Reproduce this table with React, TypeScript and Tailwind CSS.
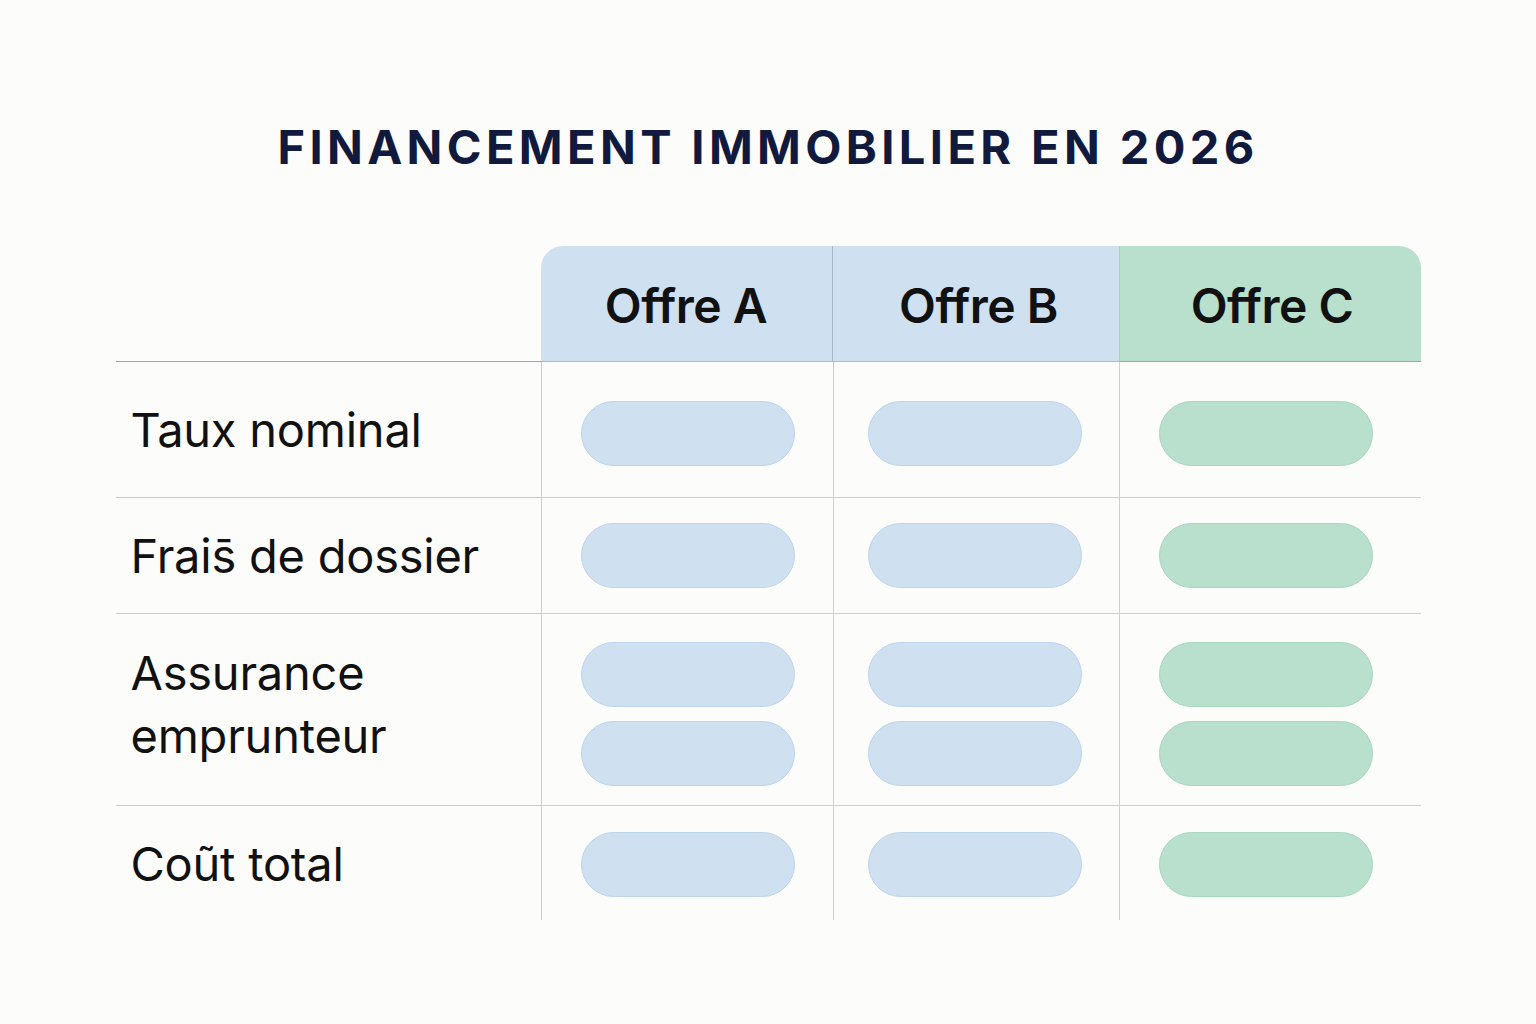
import React from "react";

const Pill = ({ green }: { green?: boolean }) => (
  <div
    className={
      "h-[65px] w-[214px] rounded-full border " +
      (green ? "bg-[#b9dfcd] border-[#a8d6bf]" : "bg-[#cfe0f1] border-[#bdd4ec]")
    }
  />
);

const rows: { label: React.ReactNode; h: string; count: number; pad: string }[] = [
  { label: "Taux nominal", h: "h-[136px]", count: 1, pad: " pt-[7px]" },
  { label: "Frais\u0304 de dossier", h: "h-[116px]", count: 1, pad: "" },
  { label: <>Assurance<br />emprunteur</>, h: "h-[192px]", count: 2, pad: " pt-[8px]" },
  { label: "Co\u0169t total", h: "h-[114px]", count: 1, pad: " pt-[2px]" },
];

export default function App() {
  return (
    <div
      className="min-h-[1024px] w-full bg-[#fcfcfb] text-[#111111]"
      style={{ fontFamily: "Inter, 'Noto Sans', sans-serif" }}
    >
      <div className="pt-[117px] text-center">
        <h1 className="text-[47px] font-bold tracking-[0.093em] leading-[60px] text-[#111a3d]">
          FINANCEMENT IMMOBILIER EN 2026
        </h1>
      </div>
      <div className="mx-auto mt-[69px] w-[1305px]">
        <div className="grid grid-cols-[425px_292px_286px_302px]">
          <div className="h-[116px] border-b border-[#a3a3a3]" />
          <div className="flex h-[116px] items-center justify-center rounded-tl-[22px] border-b border-r border-[#a9b9c9] bg-[#cfe0f1] pt-[4px] text-[48px] font-semibold tracking-[-0.01em]">
            Offre A
          </div>
          <div className="flex h-[116px] items-center justify-center border-b border-[#a9b9c9] bg-[#cfe0f1] pl-[6px] pt-[4px] text-[48px] font-semibold tracking-[-0.01em]">
            Offre B
          </div>
          <div className="flex h-[116px] items-center justify-center rounded-tr-[22px] border-b border-l border-[#a3a3a3] border-l-[#a6d3bd] bg-[#b9dfcd] pl-[4px] pt-[4px] text-[48px] font-semibold tracking-[-0.01em]">
            Offre C
          </div>
          {rows.map((r, i) => {
            const last = i === rows.length - 1;
            const bb = last ? "" : " border-b border-[#c9c9c9]";
            return (
              <React.Fragment key={i}>
                <div className={"flex items-center pl-[15px] text-[47px] tracking-[-0.005em] leading-[63px] " + r.h + bb + (r.count === 2 ? " pb-[12px]" : "")}>
                  <span>{r.label}</span>
                </div>
                <div className={"flex flex-col justify-center gap-[14px] border-l border-[#cfcfcf] pl-[39px] " + r.h + bb + r.pad}>
                  {Array.from({ length: r.count }).map((_, k) => <Pill key={k} />)}
                </div>
                <div className={"flex flex-col justify-center gap-[14px] border-l border-[#cfcfcf] pl-[34px] " + r.h + bb + r.pad}>
                  {Array.from({ length: r.count }).map((_, k) => <Pill key={k} />)}
                </div>
                <div className={"flex flex-col justify-center gap-[14px] border-l border-[#cfcfcf] pl-[39px] " + r.h + bb + r.pad}>
                  {Array.from({ length: r.count }).map((_, k) => <Pill key={k} green />)}
                </div>
              </React.Fragment>
            );
          })}
        </div>
      </div>
    </div>
  );
}
